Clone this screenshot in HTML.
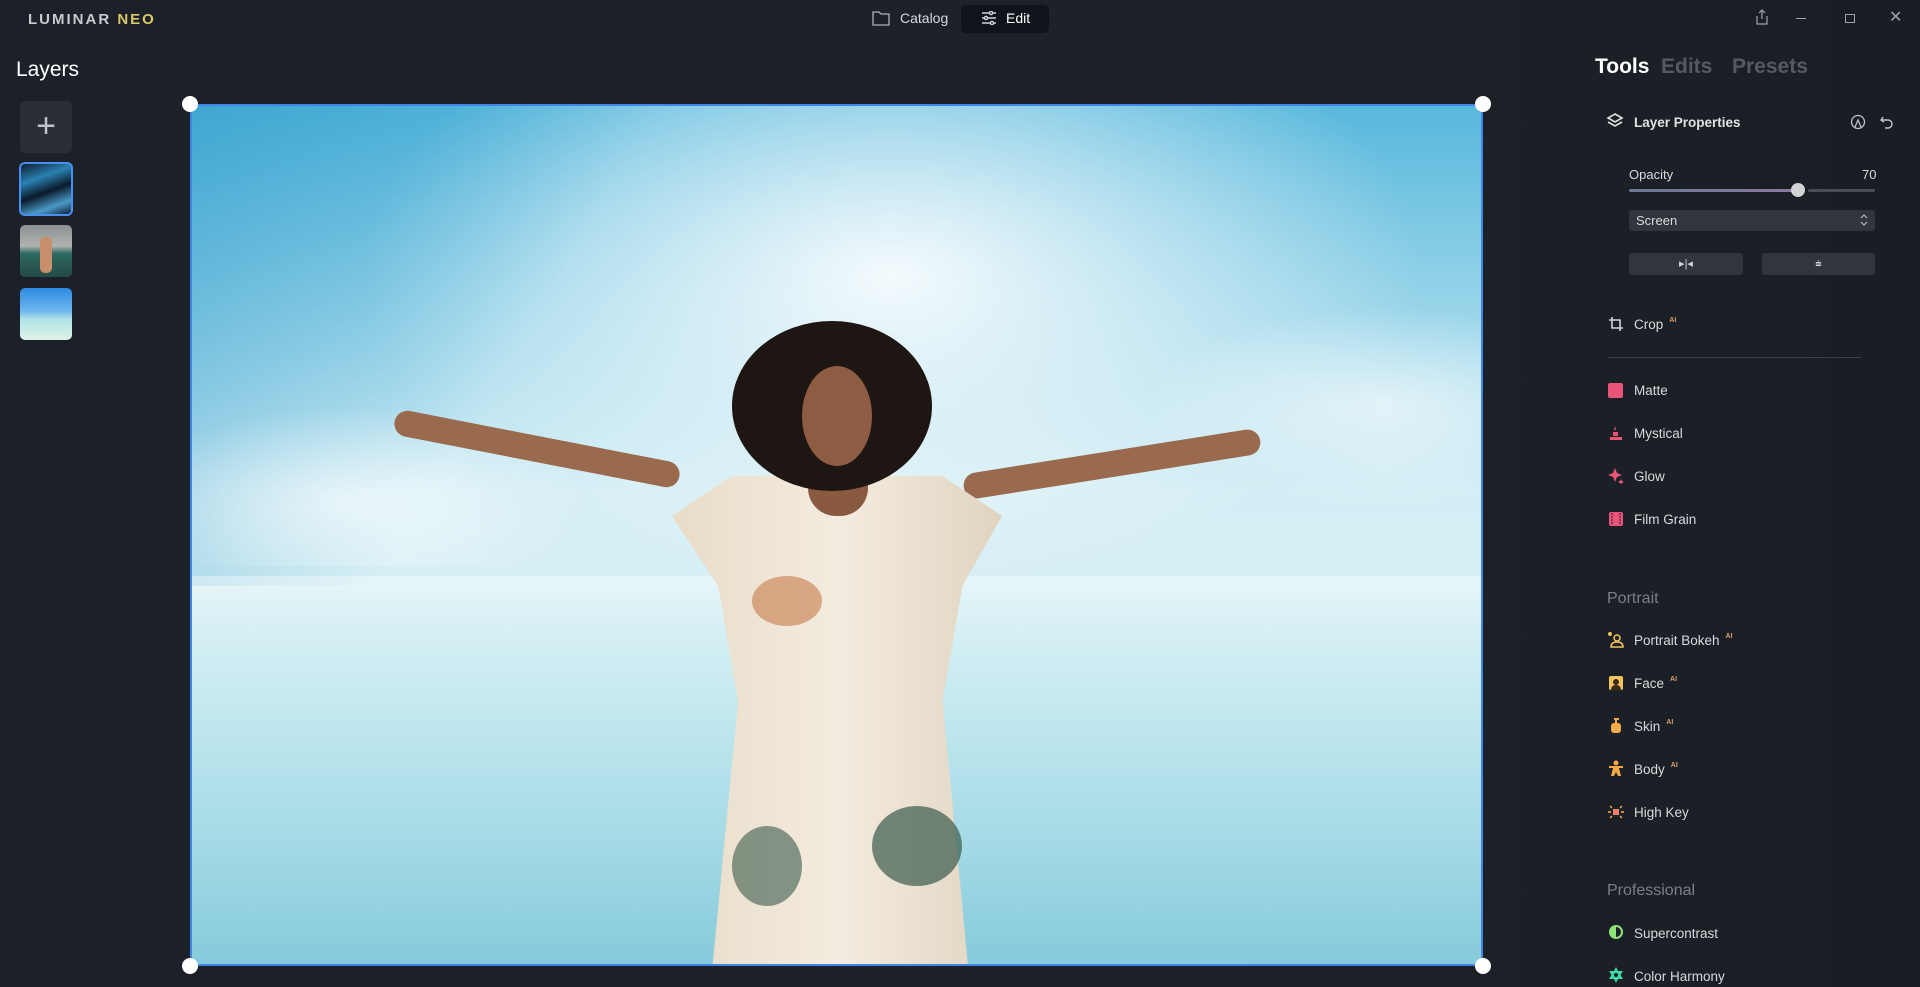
<!DOCTYPE html>
<html><head><meta charset="utf-8"><style>
*{margin:0;padding:0;box-sizing:border-box}
body{width:1920px;height:987px;overflow:hidden;background:linear-gradient(90deg,#1c2028 0%,#1d2129 60%,#1a1e24 100%);font-family:"Liberation Sans",sans-serif;color:#e6e8ea;position:relative}
.a{position:absolute}
.t{font-size:13.5px;color:#d8dadc}
.ai{font-size:7px;color:#d8a070;vertical-align:top;margin-left:6px;font-weight:bold}
.ic{position:absolute;left:1608px;width:16px;height:16px}
.sec{font-size:16px;color:#7c8086}
</style></head><body>
<div class="a" style="left:28px;top:11px;font-size:15px;letter-spacing:2px;color:#c8cacc;font-weight:bold">LUMINAR <span style="color:#d9c76a">NEO</span></div>
<svg class="a" style="left:872px;top:10px" width="18" height="16" viewBox="0 0 18 16" fill="none" stroke="#b0b4b8" stroke-width="1.3"><path d="M1 2h6l2 2h8v11H1z"/></svg>
<div class="a t" style="left:900px;top:10px;font-size:14px">Catalog</div>
<div class="a" style="left:961px;top:5px;width:88px;height:28px;background:#10141a;border-radius:5px"></div>
<svg class="a" style="left:981px;top:11px" width="16" height="14" viewBox="0 0 16 14" stroke="#d0d4d8" stroke-width="1.4"><path d="M1 2h14M1 7h14M1 12h14"/><circle cx="10" cy="2" r="1.6" fill="#10141a"/><circle cx="5" cy="7" r="1.6" fill="#10141a"/><circle cx="11" cy="12" r="1.6" fill="#10141a"/></svg>
<div class="a t" style="left:1006px;top:10px;color:#fff;font-size:14px">Edit</div>
<svg class="a" style="left:1755px;top:9px" width="14" height="16" viewBox="0 0 14 16" fill="none" stroke="#a0a4a8" stroke-width="1.2"><path d="M7 1v9M4 4l3-3 3 3M2 7v8h10V7"/></svg>
<div class="a" style="left:1796px;top:18px;width:10px;height:1px;background:#a0a4a8"></div>
<div class="a" style="left:1845px;top:14px;width:10px;height:9px;border:1px solid #a0a4a8"></div>
<div class="a" style="left:1889px;top:7px;font-size:16px;color:#a0a4a8">✕</div>

<div class="a" style="left:16px;top:58px;font-size:21px;color:#fff">Layers</div>
<div class="a" style="left:20px;top:101px;width:52px;height:52px;background:#2a2e35;border-radius:5px;color:#c0c4c8;font-size:34px;text-align:center;line-height:50px;font-weight:200">+</div>
<div class="a" style="left:19px;top:162px;width:54px;height:54px;border:2px solid #4a8ef0;border-radius:6px;background:linear-gradient(160deg,#0c1e30 0%,#2a80b0 30%,#0a1a2a 55%,#4a9ac8 80%,#0c1e30 100%)"></div>
<div class="a" style="left:20px;top:225px;width:52px;height:52px;border-radius:5px;background:linear-gradient(#8a9090 0%,#b0b4b0 40%,#2e6a60 55%,#254a45 100%)"><div class="a" style="left:20px;top:12px;width:12px;height:36px;background:#c8906a;border-radius:5px"></div></div>
<div class="a" style="left:20px;top:288px;width:52px;height:52px;border-radius:5px;background:linear-gradient(#2d8ae0 0%,#70b8f0 45%,#b0e4e8 60%,#e0f2e8 100%)"></div>

<div class="a" style="left:190px;top:104px;width:1293px;height:862px;border:2px solid #3f86e8;overflow:hidden;background:linear-gradient(180deg,#58b8dc 0%,#9cd6ea 25%,#d4eef5 45%,#d8f0f5 56%,#c4eaf0 62%,#a8dde8 78%,#88cbdc 100%)">
 <div class="a" style="left:0;top:0;width:1293px;height:480px;background:radial-gradient(ellipse 760px 440px at 700px 170px,rgba(255,255,255,.9),rgba(255,255,255,0) 70%)"></div>
 <div class="a" style="left:0;top:0;width:500px;height:480px;background:linear-gradient(120deg,rgba(40,150,200,.5),rgba(0,0,0,0) 60%)"></div>
 <div class="a" style="left:0;top:300px;width:400px;height:160px;background:radial-gradient(ellipse at 40% 60%,rgba(255,255,255,.6),rgba(255,255,255,0) 70%)"></div>
 <div class="a" style="left:950px;top:200px;width:343px;height:200px;background:radial-gradient(ellipse at 70% 50%,rgba(255,255,255,.6),rgba(255,255,255,0) 70%)"></div>
 <div class="a" style="left:0;top:470px;width:1293px;height:390px;background:linear-gradient(180deg,rgba(255,255,255,.35),rgba(120,200,215,.15))"></div>
 <div class="a" style="left:200px;top:330px;width:290px;height:26px;background:#9a6a4e;border-radius:13px;transform:rotate(11deg)"></div>
 <div class="a" style="left:770px;top:345px;width:300px;height:26px;background:#9a6a4e;border-radius:13px;transform:rotate(-9deg)"></div>
 <div class="a" style="left:480px;top:370px;width:330px;height:500px;background:linear-gradient(90deg,#e8dcc8,#f4ece0 50%,#e0d4c0);clip-path:polygon(18% 0,82% 0,100% 8%,88% 22%,82% 45%,90% 100%,12% 100%,20% 45%,14% 22%,0 8%)"></div>
 <div class="a" style="left:560px;top:470px;width:70px;height:50px;background:#c87a4a;border-radius:50%;opacity:.6"></div>
 <div class="a" style="left:680px;top:700px;width:90px;height:80px;background:#3a5a4a;border-radius:50%;opacity:.7"></div>
 <div class="a" style="left:540px;top:720px;width:70px;height:80px;background:#3a5a4a;border-radius:50%;opacity:.6"></div>
 <div class="a" style="left:616px;top:300px;width:60px;height:110px;background:#8a5a40;border-radius:28px"></div>
 <div class="a" style="left:540px;top:215px;width:200px;height:170px;background:#1e1612;border-radius:50%"></div>
 <div class="a" style="left:610px;top:260px;width:70px;height:100px;background:#8e5c42;border-radius:50%"></div>
</div>
<div class="a" style="left:182px;top:96px;width:16px;height:16px;border-radius:50%;background:#fff"></div>
<div class="a" style="left:1475px;top:96px;width:16px;height:16px;border-radius:50%;background:#fff"></div>
<div class="a" style="left:182px;top:958px;width:16px;height:16px;border-radius:50%;background:#fff"></div>
<div class="a" style="left:1475px;top:958px;width:16px;height:16px;border-radius:50%;background:#fff"></div>

<div class="a" style="left:1595px;top:55px;font-size:21px;font-weight:bold;color:#fff">Tools</div>
<div class="a" style="left:1661px;top:55px;font-size:21px;font-weight:bold;color:#555a62">Edits</div>
<div class="a" style="left:1732px;top:55px;font-size:21px;font-weight:bold;color:#555a62">Presets</div>
<svg class="a" style="left:1606px;top:112px" width="18" height="18" viewBox="0 0 18 18" fill="none" stroke="#e0e2e4" stroke-width="1.6"><path d="M9 2l7 4-7 4-7-4z M2 10l7 4 7-4"/></svg>
<div class="a" style="left:1634px;top:115px;font-size:13.5px;font-weight:bold;color:#e0e2e4">Layer Properties</div>
<svg class="a" style="left:1850px;top:114px" width="16" height="16" viewBox="0 0 16 16" fill="none" stroke="#c0c4c8" stroke-width="1.3"><circle cx="8" cy="8" r="6.5"/><path d="M5 13l3-7 3 7"/></svg>
<svg class="a" style="left:1879px;top:114px" width="16" height="16" viewBox="0 0 16 16" fill="none" stroke="#c0c4c8" stroke-width="1.4"><path d="M4 3L2 6l3 2M2 6h7a4 4 0 010 8H6"/></svg>
<div class="a t" style="left:1629px;top:167px;font-size:13px">Opacity</div>
<div class="a t" style="left:1862px;top:167px;font-size:13px">70</div>
<div class="a" style="left:1629px;top:189px;width:166px;height:3px;background:linear-gradient(90deg,#6a7890,#8a7aa0);border-radius:2px"></div>
<div class="a" style="left:1808px;top:189px;width:67px;height:3px;background:#4a4e54;border-radius:2px"></div>
<div class="a" style="left:1791px;top:183px;width:14px;height:14px;border-radius:50%;background:#d0d2d4"></div>
<div class="a" style="left:1629px;top:210px;width:246px;height:21px;background:#31353c;border-radius:3px"></div>
<div class="a t" style="left:1636px;top:213px;font-size:13px">Screen</div>
<svg class="a" style="left:1860px;top:213px" width="8" height="14" viewBox="0 0 8 14" fill="none" stroke="#b0b4b8" stroke-width="1.2"><path d="M1 5l3-3 3 3M1 9l3 3 3-3"/></svg>
<div class="a" style="left:1629px;top:253px;width:114px;height:22px;background:#31353c;border-radius:3px;text-align:center;font-size:11px;line-height:22px;color:#d0d2d4">▸|◂</div>
<div class="a" style="left:1762px;top:253px;width:113px;height:22px;background:#31353c;border-radius:3px;text-align:center;font-size:11px;line-height:22px;color:#d0d2d4">⩧</div>

<svg class="ic" style="top:316px" viewBox="0 0 16 16" fill="none" stroke="#d0d4d8" stroke-width="1.6"><path d="M4 1v11h11M1 4h11v11"/></svg>
<div class="a t" style="left:1634px;top:317px">Crop<span class="ai">AI</span></div>
<div class="a" style="left:1608px;top:357px;width:253px;height:1px;background:#3a3e44"></div>

<div class="ic" style="top:383px;width:15px;height:15px;background:#e95478;border-radius:2px"></div>
<div class="a t" style="left:1634px;top:383px">Matte</div>
<svg class="ic" style="top:425px" viewBox="0 0 16 16" fill="#e95478"><path d="M7 1l1 4H6zM5 7h5v4H5zM2 12h12v3H2z"/></svg>
<div class="a t" style="left:1634px;top:426px">Mystical</div>
<svg class="ic" style="top:468px" viewBox="0 0 16 16" fill="#e95478"><path d="M7 0l2 5 5 2-5 2-2 5-2-5-5-2 5-2z"/><path d="M13 11l1 2 2 1-2 1-1 1-1-1-2-1 2-1z"/></svg>
<div class="a t" style="left:1634px;top:469px">Glow</div>
<svg class="ic" style="top:511px" viewBox="0 0 16 16"><rect x="1" y="1" width="14" height="14" rx="2" fill="#e95478"/><path d="M4 2v12M12 2v12" stroke="#1c2028" stroke-width="1" stroke-dasharray="2 1"/></svg>
<div class="a t" style="left:1634px;top:512px">Film Grain</div>

<div class="a sec" style="left:1607px;top:590px">Portrait</div>
<svg class="ic" style="top:632px" viewBox="0 0 16 16" fill="none" stroke="#f3c55a" stroke-width="1.5"><circle cx="9" cy="6" r="3"/><path d="M3 15c0-4 3-5 6-5s6 1 6 5z"/><circle cx="2" cy="2" r="1.2" fill="#f3c55a"/></svg>
<div class="a t" style="left:1634px;top:633px">Portrait Bokeh<span class="ai">AI</span></div>
<svg class="ic" style="top:675px" viewBox="0 0 16 16"><rect x="1" y="1" width="14" height="14" rx="2" fill="#f3c55a"/><circle cx="8" cy="7" r="3" fill="#3a2a10"/><path d="M3 15c0-4 3-5 5-5s5 1 5 5z" fill="#3a2a10"/></svg>
<div class="a t" style="left:1634px;top:676px">Face<span class="ai">AI</span></div>
<svg class="ic" style="top:717px" viewBox="0 0 16 16" fill="#f5a94a"><path d="M6 1h5v2H9v3H7V3H6z"/><rect x="3" y="6" width="10" height="10" rx="3"/></svg>
<div class="a t" style="left:1634px;top:719px">Skin<span class="ai">AI</span></div>
<svg class="ic" style="top:760px" viewBox="0 0 16 16" fill="#f5a94a"><circle cx="8" cy="3" r="2.5"/><path d="M1 6h14v2h-4l2 8h-3l-2-4-2 4H3l2-8H1z"/></svg>
<div class="a t" style="left:1634px;top:762px">Body<span class="ai">AI</span></div>
<svg class="ic" style="top:804px" viewBox="0 0 16 16"><rect x="5" y="5" width="6" height="6" fill="#f0806a"/><path d="M0 8h3M13 8h3M2 2l2 2M14 2l-2 2M2 14l2-2M14 14l-2-2" stroke="#f5a94a" stroke-width="1.4"/></svg>
<div class="a t" style="left:1634px;top:805px">High Key</div>

<div class="a sec" style="left:1607px;top:882px">Professional</div>
<svg class="ic" style="top:924px" viewBox="0 0 16 16"><circle cx="8" cy="8" r="7" fill="#8ee27a"/><path d="M8 3a5 5 0 010 10z" fill="#1c2028"/></svg>
<div class="a t" style="left:1634px;top:926px">Supercontrast</div>
<svg class="ic" style="top:967px" viewBox="0 0 16 16" fill="#3fd6a6"><path d="M8 0l2 4h5l-2.5 4 2.5 4h-5l-2 4-2-4H1l2.5-4L1 4h5z"/><circle cx="8" cy="8" r="2" fill="#1c2028"/></svg>
<div class="a t" style="left:1634px;top:969px">Color Harmony</div>
</body></html>
